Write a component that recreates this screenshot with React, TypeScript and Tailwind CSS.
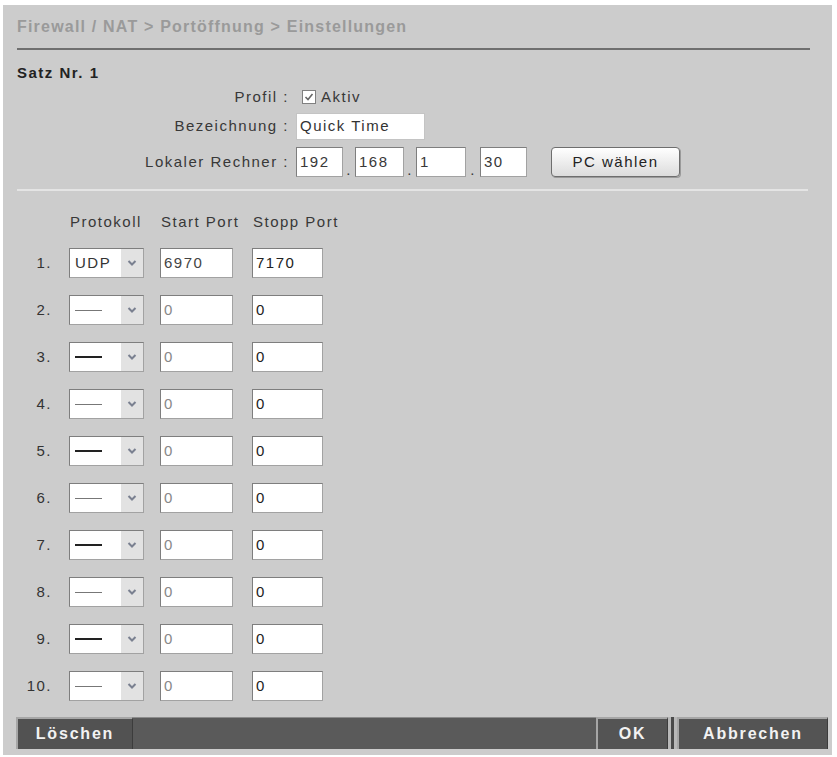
import React from "react";

type PortRow = { proto: string; start: string; stop: string };

const rows: PortRow[] = [
  { proto: "UDP", start: "6970", stop: "7170" },
  ...Array.from({ length: 9 }, () => ({ proto: "", start: "0", stop: "0" })),
];

function Field({ w, value, className = "" }: { w: string; value: string; className?: string }) {
  return (
    <div
      className={`${w} h-[30px] bg-white border border-[#a2a2a2] border-t-[#7e7e7e] border-l-[#7e7e7e] flex items-center pl-[3px] overflow-hidden ${className}`}
    >
      {value}
    </div>
  );
}

function ProtoSelect({ proto, index }: { proto: string; index: number }) {
  const thick = index % 2 === 0;
  return (
    <div className="w-[75px] h-[30px] bg-white border border-[#a2a2a2] border-t-[#7e7e7e] border-l-[#7e7e7e] flex">
      <div className="flex-1 flex items-center pl-[5px]">
        {proto ? (
          <span className="text-[#333]">{proto}</span>
        ) : (
          <span className={`block w-[27px] ${thick ? "h-[2px] bg-[#222]" : "h-px bg-[#777]"}`} />
        )}
      </div>
      <div className="w-[22px] bg-[#e2e2e2] flex items-center justify-center">
        <svg width="10" height="8" viewBox="0 0 10 8">
          <path d="M1.5 2 L5 5.5 L8.5 2" fill="none" stroke="#7a8090" strokeWidth="2" />
        </svg>
      </div>
    </div>
  );
}

export default function App() {
  return (
    <div className="min-h-[757px] bg-white pt-[5px] pl-[3px] font-['Liberation_Sans',Arial,sans-serif]">
      <div className="w-[829px] h-[750px] bg-[#cccccc] flex flex-col pl-[14px] pr-[4px] text-[15px] tracking-[1.5px] text-[#383838]">
        {/* breadcrumb */}
        <div className="mt-[12px] h-[20px] leading-[20px] text-[16px] font-bold tracking-[1.2px] text-[#9a9a9a]">
          Firewall / NAT &gt; Portöffnung &gt; Einstellungen
        </div>
        <div className="mt-[11px] h-[2px] w-[793px] bg-[#6f6f6f]" />

        <div className="mt-[13px] h-[20px] leading-[20px] font-bold text-[#222]">Satz Nr. 1</div>

        {/* general settings */}
        <div className="mt-[5px] h-[18px] flex items-center">
          <div className="w-[274px] text-right pr-[2px]">Profil :</div>
          <div className="ml-[11px] w-[14px] h-[14px] bg-white border border-[#808080] flex items-center justify-center">
            <svg width="10" height="10" viewBox="0 0 10 10">
              <path d="M1.5 5 L4 7.5 L8.5 2" fill="none" stroke="#666" strokeWidth="1.6" />
            </svg>
          </div>
          <span className="ml-[5px]">Aktiv</span>
        </div>

        <div className="mt-[7px] h-[27px] flex items-center">
          <div className="w-[274px] text-right pr-[2px]">Bezeichnung :</div>
          <div className="ml-[5px] w-[129px] h-[27px] bg-white border border-[#c4c4c4] flex items-center pl-[3px] text-[#333]">
            Quick Time
          </div>
        </div>

        <div className="mt-[7px] h-[30px] flex items-center">
          <div className="w-[274px] text-right pr-[2px]">Lokaler Rechner :</div>
          <div className="ml-[5px] flex items-end">
            <Field w="w-[47px]" value="192" />
            <span className="w-[12px] text-center leading-[14px]">.</span>
            <Field w="w-[49px]" value="168" />
            <span className="w-[12px] text-center leading-[14px]">.</span>
            <Field w="w-[50px]" value="1" />
            <span className="w-[14px] text-center leading-[14px]">.</span>
            <Field w="w-[47px]" value="30" />
          </div>
          <button className="ml-[24px] w-[129px] h-[30px] rounded-[4px] border border-[#6e6e6e] bg-gradient-to-b from-white to-[#dcdcdc] text-[15px] tracking-[1.5px] text-[#222] shadow-[1px_1px_0_#9a9a9a]">
            PC wählen
          </button>
        </div>

        <div className="mt-[12px] h-[2px] w-[791px] bg-[#e4e4e4]" />

        {/* port table */}
        <div className="mt-[21px] h-[20px] leading-[20px] flex">
          <div className="w-[35px]" />
          <div className="ml-[18px] w-[75px]">Protokoll</div>
          <div className="ml-[16px] w-[73px] whitespace-nowrap">Start Port</div>
          <div className="ml-[19px] whitespace-nowrap">Stopp Port</div>
        </div>

        <div className="mt-[16px] flex flex-col gap-[17px]">
          {rows.map((r, i) => (
            <div key={i} className="h-[30px] flex items-center">
              <div className="w-[35px] text-right text-[#333]">{i + 1}.</div>
              <div className="ml-[17px]">
                <ProtoSelect proto={r.proto} index={i} />
              </div>
              <Field
                w="w-[73px]"
                value={r.start}
                className={`ml-[16px] ${r.proto ? "text-[#444]" : "text-[#888]"}`}
              />
              <Field w="w-[71px]" value={r.stop} className="ml-[19px] text-[#222]" />
            </div>
          ))}
        </div>

        {/* action bar */}
        <div className="mt-[16px] h-[32px] w-[812px] -ml-[1px] flex text-[16px] font-bold tracking-[1.8px] text-[#f2f2f2]">
          <button className="w-[117px] h-full bg-[#525252] border-t-2 border-l-2 border-[#a6a6a6] border-r border-r-[#3c3c3c]">
            Löschen
          </button>
          <div className="flex-1 bg-[#5a5a5a] border-t border-[#8c8c8c]" />
          <button className="w-[72px] h-full bg-[#545454] border-t-2 border-l-2 border-[#a6a6a6] border-r border-r-[#3c3c3c]">
            OK
          </button>
          <div className="w-[9px] h-full flex bg-[#b8b8b8]">
            <div className="ml-[3px] w-[3px] bg-[#4a4a4a]" />
          </div>
          <button className="w-[151px] h-full bg-[#545454] border-t-2 border-l-2 border-[#a6a6a6] border-r border-r-[#3c3c3c]">
            Abbrechen
          </button>
        </div>
      </div>
    </div>
  );
}
